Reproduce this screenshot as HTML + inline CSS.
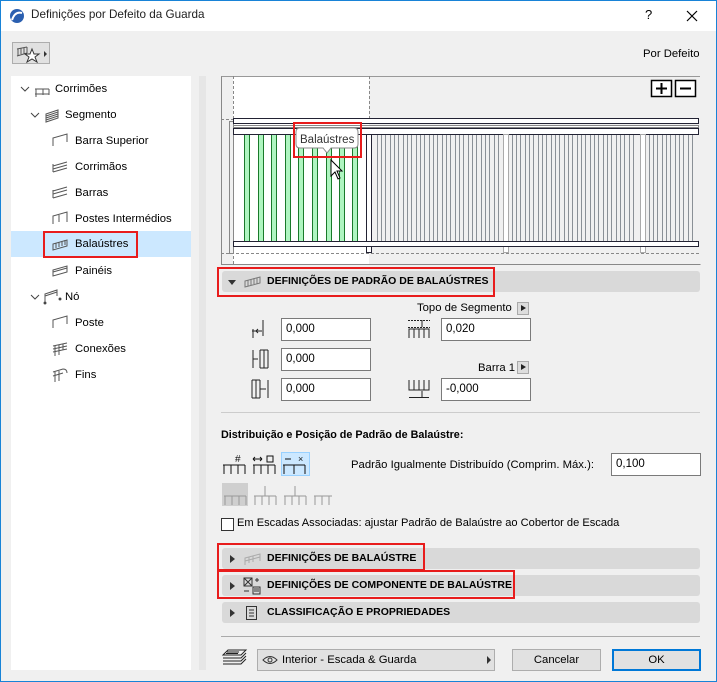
<!DOCTYPE html>
<html><head><meta charset="utf-8"><style>
*{box-sizing:border-box;margin:0;padding:0}
body{width:717px;height:682px;overflow:hidden;font-family:"Liberation Sans",sans-serif;font-size:11.3px;color:#000;background:#f0f0f0;position:relative}
.a{position:absolute}
.win{left:0;top:0;width:717px;height:682px;border:1px solid #1883d7}
.title{left:1px;top:1px;width:715px;height:30px;background:#fff}
.tree{left:11px;top:76px;width:180px;height:594px;background:#fff}
.row{position:absolute;left:0;width:180px;height:26px;line-height:26px;font-size:11.3px}
.inp{position:absolute;background:#fff;border:1px solid #7a7a7a;height:23px;line-height:21px;padding-left:4px;font-size:11.5px}
.hdr{position:absolute;left:222px;width:478px;height:21px;background:#d9d9d9;border-radius:3px;font-weight:bold;font-size:10.5px;line-height:21px}
.hdr .t{position:absolute;left:45px}
.tri{position:absolute;left:8px;top:7px;width:0;height:0;border-top:4px solid transparent;border-bottom:4px solid transparent;border-left:5px solid #333}
.red{position:absolute;border:2px solid #e81c1c}
.btn{position:absolute;background:#e1e1e1;border:1px solid #adadad;text-align:center;line-height:20px;height:22px}
</style></head><body>
<div class="a win"></div>
<div class="a title"></div>
<svg class="a" style="left:9px;top:8px" width="16" height="16"><circle cx="8" cy="8" r="7" fill="#2a5fb0"/><path d="M3 12 Q6 3 13 5" stroke="#fff" stroke-width="2" fill="none"/></svg>
<div class="a" style="left:31px;top:8px;font-size:11.7px;color:#222">Definições por Defeito da Guarda</div>
<div class="a" style="left:645px;top:7px;font-size:13px">?</div>
<svg class="a" style="left:686px;top:10px" width="12" height="12"><path d="M1 1L11 11M11 1L1 11" stroke="#000" stroke-width="1.2"/></svg>

<div class="a" style="left:12px;top:42px;width:38px;height:22px;background:#e1e1e1;border:1px solid #adadad"></div>
<svg class="a" style="left:15px;top:44px" width="34" height="20"><path d="M2 5 L12 3 M3 5 V12 M6 4.5V10 M9 4V10 M12 3V9 M2 12 L12 9" stroke="#555" fill="none"/><path d="M17 5 L19 10 L24 10 L20 13 L22 18 L17 15 L12 18 L14 13 L10 10 L15 10Z" stroke="#333" fill="#fff"/><path d="M29 7 L32 10 L29 13Z" fill="#333"/></svg>
<div class="a" style="left:643px;top:48px">Por Defeito</div>

<div class="a tree"></div>
<div class="a" style="left:11px;top:231px;width:180px;height:26px;background:#cce8ff"></div>
<div class="red" style="left:43px;top:231px;width:95px;height:27px"></div>
<svg class="a" style="left:11px;top:76px" width="180" height="320" fill="none" stroke="#555">
<path d="M10 11l4 4 4-4M20 37l4 4 4-4M20 219l4 4 4-4" stroke="#444"/>
<path d="M24 18h14M24 13h14M25 13v8M32 13v6M38 13v6" />
<path d="M35 38l12-4v8l-12 4zM35 40l12-4M35 42l12-4M35 44l12-4"/>
<g transform="translate(0,52)"><path d="M42 18v-8l14-4v8"/></g>
<g transform="translate(0,78)"><path d="M42 18l14-4M42 15l14-4M42 12l14-4M42 10v8"/></g>
<g transform="translate(0,104)"><path d="M42 18l14-4M42 14l14-4M42 11l14-4M42 10v8"/></g>
<g transform="translate(0,130)"><path d="M42 18v-8l14-4v10M48 9v7"/></g>
<g transform="translate(0,156)"><path d="M42 18v-6l14-4v6zM45 11v5M48 10v5M51 9v5M54 8v5"/></g>
<g transform="translate(0,182)"><path d="M42 18v-6l14-4v6zM42 14l14-4"/></g>
<g transform="translate(0,208)"><path d="M34 18v-8l12-4v6M34 12l12-4"/><circle cx="34" cy="19" r="1" fill="#000"/><circle cx="49" cy="15" r="1" fill="#000"/></g>
<g transform="translate(0,234)"><path d="M42 18v-8l14-4v8"/></g>
<g transform="translate(0,260)"><path d="M42 10l14-3M42 13l14-3M42 16l14-3M44 10v10M48 9v10M52 8v6"/></g>
<g transform="translate(0,286)"><path d="M42 10l10-3q4 0 4 4M44 10v10M48 9v10M42 14l10-3"/></g>
</svg>
<div class="row" style="left:55px;top:76px;width:100px">Corrimões</div>
<div class="row" style="left:65px;top:102px;width:100px">Segmento</div>
<div class="row" style="left:75px;top:128px;width:110px">Barra Superior</div>
<div class="row" style="left:75px;top:154px;width:110px">Corrimãos</div>
<div class="row" style="left:75px;top:180px;width:110px">Barras</div>
<div class="row" style="left:75px;top:206px;width:110px">Postes Intermédios</div>
<div class="row" style="left:75px;top:231px;width:110px">Balaústres</div>
<div class="row" style="left:75px;top:258px;width:110px">Painéis</div>
<div class="row" style="left:65px;top:284px;width:110px">Nó</div>
<div class="row" style="left:75px;top:310px;width:110px">Poste</div>
<div class="row" style="left:75px;top:336px;width:110px">Conexões</div>
<div class="row" style="left:75px;top:362px;width:110px">Fins</div>

<div class="a" style="left:199px;top:76px;width:7px;height:594px;background:#e6e6e6"></div>

<svg class="a" style="left:221px;top:76px" width="480" height="189" viewBox="221 76 480 189">
<rect x="221" y="76" width="480" height="189" fill="#f0f0f0"/>
<rect x="233" y="76" width="136" height="189" fill="#fff"/>
<path d="M221.5 76V264.5H700.5" stroke="#888" fill="none"/>
<path d="M221.5 76.5H700" stroke="#999"/>
<path d="M233.5 76V264M369.5 76V118M221 119.5H233M221 253.5H700" stroke="#888" stroke-dasharray="3 2"/>
<rect x="229.5" y="121.5" width="4" height="132" fill="none" stroke="#888"/>
<g fill="#aff5c0" stroke="#1a7a2a">
<rect x="244.5" y="126" width="5" height="116"/><rect x="258.5" y="126" width="5" height="116"/><rect x="271.5" y="126" width="5" height="116"/><rect x="285.5" y="126" width="5" height="116"/><rect x="298.5" y="126" width="5" height="116"/><rect x="312.5" y="126" width="5" height="116"/><rect x="326.5" y="126" width="5" height="116"/><rect x="339.5" y="126" width="5" height="116"/><rect x="352.5" y="126" width="5" height="116"/>
</g>
<g stroke="#8a9096">
<path d="M377.5 134V242M381.5 134V242M385.5 134V242M390.5 134V242M394.5 134V242M398.5 134V242M403.5 134V242M407.5 134V242M411.5 134V242M416.5 134V242M420.5 134V242M424.5 134V242M429.5 134V242M433.5 134V242M437.5 134V242M442.5 134V242M446.5 134V242M450.5 134V242M455.5 134V242M459.5 134V242M463.5 134V242M468.5 134V242M472.5 134V242M476.5 134V242M481.5 134V242M485.5 134V242M489.5 134V242M494.5 134V242M498.5 134V242M512.5 134V242M516.5 134V242M520.5 134V242M525.5 134V242M529.5 134V242M533.5 134V242M538.5 134V242M542.5 134V242M546.5 134V242M551.5 134V242M555.5 134V242M559.5 134V242M564.5 134V242M568.5 134V242M572.5 134V242M577.5 134V242M581.5 134V242M585.5 134V242M590.5 134V242M594.5 134V242M598.5 134V242M603.5 134V242M607.5 134V242M611.5 134V242M616.5 134V242M620.5 134V242M624.5 134V242M629.5 134V242M633.5 134V242M649.5 134V242M653.5 134V242M657.5 134V242M662.5 134V242M666.5 134V242M670.5 134V242M675.5 134V242M679.5 134V242M683.5 134V242M688.5 134V242M692.5 134V242"/>
</g>
<g fill="#fff" stroke="#223">
<rect x="233.5" y="118.5" width="465" height="5"/>
<rect x="233.5" y="125.5" width="465" height="2" fill="#fff" stroke="#888"/>
<rect x="233.5" y="128.5" width="465" height="6"/>
<rect x="233.5" y="241.5" width="465" height="5"/>
<rect x="366.5" y="134.5" width="5" height="118"/>
<rect x="503.5" y="134.5" width="5" height="118" stroke="#aaa"/>
<rect x="640.5" y="134.5" width="5" height="118" stroke="#aaa"/>
<rect x="233.5" y="241.5" width="465" height="5"/>
</g>
<rect x="651.5" y="80.5" width="20" height="16" fill="#fff" stroke="#000" stroke-width="1.5"/>
<rect x="675.5" y="80.5" width="20" height="16" fill="#fff" stroke="#000" stroke-width="1.5"/>
<path d="M661.5 83V94M656 88.5H667M680 88.5H691" stroke="#000" stroke-width="2"/>
<path d="M296 132 Q296 128 300 128 H354 Q358 128 358 132 V144 Q358 148 354 148 H331 L327 153 L323 148 H300 Q296 148 296 144Z" fill="#fff" stroke="#888"/>
<text x="300" y="143" font-family="Liberation Sans" font-size="11.5" fill="#333">Balaústres</text>
<path d="M331 160 V176 L335 172 L338 179 L340 178 L337 171 L342 171Z" fill="#fff" stroke="#000"/>
</svg>
<div class="red" style="left:293px;top:122px;width:69px;height:36px"></div>

<div class="hdr" style="top:271px"><div class="tri" style="border:none;border-left:4px solid transparent;border-right:4px solid transparent;border-top:5px solid #333;top:9px;left:6px"></div>
<svg class="a" style="left:22px;top:4px" width="18" height="14" fill="none" stroke="#777"><path d="M1 12V6l15-4v6zM4 5v6M7 4v6M10 3v6M13 2.5v6"/></svg><span class="t">DEFINIÇÕES DE PADRÃO DE BALAÚSTRES</span></div>
<div class="red" style="left:217px;top:267px;width:278px;height:30px"></div>

<div class="a" style="left:417px;top:302px">Topo de Segmento</div>
<div class="a" style="left:517px;top:302px;width:12px;height:13px;background:#ddd;border:1px solid #aaa"></div>
<div class="a" style="left:521px;top:305px;border-top:3.5px solid transparent;border-bottom:3.5px solid transparent;border-left:5px solid #222"></div>
<div class="a" style="left:478px;top:362px">Barra 1</div>
<div class="a" style="left:517px;top:361px;width:12px;height:13px;background:#ddd;border:1px solid #aaa"></div>
<div class="a" style="left:521px;top:364px;border-top:3.5px solid transparent;border-bottom:3.5px solid transparent;border-left:5px solid #222"></div>

<div class="inp" style="left:281px;top:318px;width:90px">0,000</div>
<div class="inp" style="left:281px;top:348px;width:90px">0,000</div>
<div class="inp" style="left:281px;top:378px;width:90px">0,000</div>
<div class="inp" style="left:441px;top:318px;width:90px">0,020</div>
<div class="inp" style="left:441px;top:378px;width:90px">-0,000</div>
<svg class="a" style="left:250px;top:318px" width="30" height="90" fill="none" stroke="#222">
<path d="M13 2V18M2 13H12M3 11V20" /><path d="M6 13l2-2M6 13l2 2"/>
<path d="M3 32V50M3 41H8M10 32V50M14 32V50M18 32V50M10 32H18M10 50H18" />
<path d="M2 62V80M6 62V80M10 62V80M2 62H10M2 80H10M10 71H16M18 62V80"/>
</svg>
<svg class="a" style="left:408px;top:318px" width="26" height="90" fill="none" stroke="#222">
<path d="M0 2.5H22M0 9.5H22" stroke-dasharray="2 1"/><path d="M14 2V9M1 20V11H21V20M6 11V20M11 11V20M16 11V20"/>
<path d="M1 62V72H21V62M6 62V72M11 62V72M16 62V72M1 72H21M1 79.5H21" /><path d="M14 73V79"/>
</svg>

<div class="a" style="left:221px;top:412px;width:479px;height:1px;background:#ccc"></div>
<div class="a" style="left:221px;top:429px;font-weight:bold;font-size:10.8px">Distribuição e Posição de Padrão de Balaústre:</div>
<div class="a" style="left:281px;top:452px;width:29px;height:24px;background:#cce8ff;border:1px solid #99d1ff"></div>
<svg class="a" style="left:222px;top:452px" width="90" height="24" fill="none" stroke="#111">
<path d="M1 13H23M2 13V22M9 13V22M16 13V22M23 13V22"/><text x="13" y="10" font-size="10" fill="#111" stroke="none" font-family="Liberation Sans">#</text>
<path d="M31 13H53M32 13V22M39 13V22M46 13V22M53 13V22M31 7H40M31 7l2-2M31 7l2 2M40 7l-2-2M40 7l-2 2"/><rect x="45" y="4" width="6" height="6"/>
<path d="M61 13H83M62 13V22M72 13V22M83 13V22M63 7h6"/><text x="76" y="10" font-size="9" fill="#111" stroke="none" font-family="Liberation Sans">×</text>
</svg>
<div class="a" style="left:222px;top:483px;width:26px;height:23px;background:#cfcfcf"></div>
<svg class="a" style="left:222px;top:482px" width="110" height="26" fill="none" stroke="#999">
<path d="M2 14H24M3 14V23M10 14V23M17 14V23M24 14V23"/>
<path d="M32 14H54M33 14V23M40 14V23M47 14V23M54 14V23M43 4V14"/>
<path d="M62 14H84M63 14V23M70 14V23M77 14V23M84 14V23M73 4V14"/>
<path d="M92 14H114M93 14V23M100 14V23M107 14V23M114 14V23M111 4V14"/>
</svg>
<div class="a" style="left:351px;top:459px">Padrão Igualmente Distribuído (Comprim. Máx.):</div>
<div class="inp" style="left:611px;top:453px;width:90px">0,100</div>

<div class="a" style="left:221px;top:518px;width:13px;height:13px;background:#fff;border:1px solid #333"></div>
<div class="a" style="left:237px;top:517px;font-size:11.1px">Em Escadas Associadas: ajustar Padrão de Balaústre ao Cobertor de Escada</div>

<div class="hdr" style="top:548px"><div class="tri"></div><svg class="a" style="left:22px;top:4px" width="18" height="14" fill="none" stroke="#aaa"><path d="M1 13V6l15-4v7M1 9l15-4M5 5v6M9 4v6"/></svg><span class="t">DEFINIÇÕES DE BALAÚSTRE</span></div>
<div class="hdr" style="top:575px"><div class="tri"></div><svg class="a" style="left:20px;top:2px" width="20" height="18" fill="none" stroke="#333"><rect x="2" y="1" width="8" height="8"/><path d="M2 1l8 8M10 1L2 9M13 3h4M15 1v4M2 14h5M11 10h7v7h-7zM12 12h5M12 14h5"/></svg><span class="t">DEFINIÇÕES DE COMPONENTE DE BALAÚSTRE</span></div>
<div class="hdr" style="top:602px"><div class="tri"></div><svg class="a" style="left:23px;top:3px" width="14" height="16" fill="none" stroke="#333"><rect x="1.5" y="1.5" width="10" height="13"/><path d="M4 5h5M4 8h5M4 11h5"/></svg><span class="t">CLASSIFICAÇÃO E PROPRIEDADES</span></div>
<div class="red" style="left:217px;top:543px;width:208px;height:28px"></div>
<div class="red" style="left:217px;top:570px;width:298px;height:29px"></div>

<div class="a" style="left:221px;top:636px;width:479px;height:1px;background:#aaa"></div>
<svg class="a" style="left:222px;top:648px" width="26" height="20" fill="none" stroke="#222"><path d="M6 2h18l-5 5H1zM1 10h18l5-5M1 13h18l5-5M1 16h18l5-5M5 4h12M4 5.5h12"/></svg>
<div class="btn" style="left:257px;top:649px;width:238px;text-align:left;padding-left:24px">Interior - Escada &amp; Guarda</div>
<svg class="a" style="left:262px;top:655px" width="16" height="10" fill="none" stroke="#333"><path d="M1 5Q8 -2 15 5Q8 12 1 5z"/><circle cx="8" cy="5" r="2"/></svg>
<div class="a" style="left:487px;top:656px;border-top:4px solid transparent;border-bottom:4px solid transparent;border-left:4px solid #333"></div>
<div class="btn" style="left:512px;top:649px;width:89px">Cancelar</div>
<div class="btn" style="left:612px;top:649px;width:89px;border:2px solid #0078d7;line-height:18px">OK</div>
</body></html>
